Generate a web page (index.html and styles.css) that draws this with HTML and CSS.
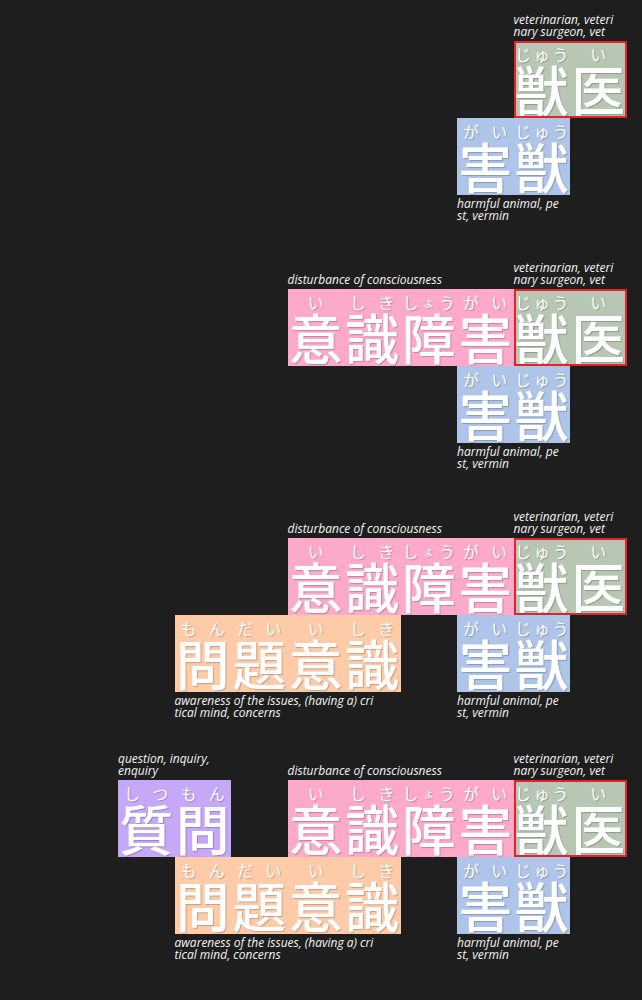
FILE: index.html
```html
<!DOCTYPE html>
<html lang="ja">
<head>
<meta charset="utf-8">
<title>Word chain</title>
<link rel="stylesheet" href="styles.css">
</head>
<body>
<main class="stages">

  <section class="board board--s1">
    <p class="label label--top c8">veterinarian, veteri<br>nary surgeon, vet</p>
    <div class="tile tile--green tile--active c8 r1">
      <div class="cell"><div class="ruby"><span>じ</span><span>ゅ</span><span>う</span></div><div class="kanji">獣</div></div>
      <div class="cell"><div class="ruby"><span>い</span></div><div class="kanji">医</div></div>
    </div>
    <div class="tile tile--blue c7 r2">
      <div class="cell"><div class="ruby"><span>が</span><span>い</span></div><div class="kanji">害</div></div>
      <div class="cell"><div class="ruby"><span>じ</span><span>ゅ</span><span>う</span></div><div class="kanji">獣</div></div>
    </div>
    <p class="label label--bottom c7">harmful animal, pe<br>st, vermin</p>
  </section>

  <section class="board board--s2">
    <p class="label label--top c4 w4">disturbance of consciousness</p>
    <p class="label label--top c8">veterinarian, veteri<br>nary surgeon, vet</p>
    <div class="tile tile--pink c4 w4 r1">
      <div class="cell"><div class="ruby"><span>い</span></div><div class="kanji">意</div></div>
      <div class="cell"><div class="ruby"><span>し</span><span>き</span></div><div class="kanji">識</div></div>
      <div class="cell"><div class="ruby"><span>し</span><span class="sm">ょ</span><span>う</span></div><div class="kanji">障</div></div>
      <div class="cell"><div class="ruby"><span>が</span><span>い</span></div><div class="kanji">害</div></div>
    </div>
    <div class="tile tile--green tile--active c8 r1">
      <div class="cell"><div class="ruby"><span>じ</span><span>ゅ</span><span>う</span></div><div class="kanji">獣</div></div>
      <div class="cell"><div class="ruby"><span>い</span></div><div class="kanji">医</div></div>
    </div>
    <div class="tile tile--blue c7 r2">
      <div class="cell"><div class="ruby"><span>が</span><span>い</span></div><div class="kanji">害</div></div>
      <div class="cell"><div class="ruby"><span>じ</span><span>ゅ</span><span>う</span></div><div class="kanji">獣</div></div>
    </div>
    <p class="label label--bottom c7">harmful animal, pe<br>st, vermin</p>
  </section>

  <section class="board board--s3">
    <p class="label label--top c4 w4">disturbance of consciousness</p>
    <p class="label label--top c8">veterinarian, veteri<br>nary surgeon, vet</p>
    <div class="tile tile--pink c4 w4 r1">
      <div class="cell"><div class="ruby"><span>い</span></div><div class="kanji">意</div></div>
      <div class="cell"><div class="ruby"><span>し</span><span>き</span></div><div class="kanji">識</div></div>
      <div class="cell"><div class="ruby"><span>し</span><span class="sm">ょ</span><span>う</span></div><div class="kanji">障</div></div>
      <div class="cell"><div class="ruby"><span>が</span><span>い</span></div><div class="kanji">害</div></div>
    </div>
    <div class="tile tile--green tile--active c8 r1">
      <div class="cell"><div class="ruby"><span>じ</span><span>ゅ</span><span>う</span></div><div class="kanji">獣</div></div>
      <div class="cell"><div class="ruby"><span>い</span></div><div class="kanji">医</div></div>
    </div>
    <div class="tile tile--peach c2 w4 r2">
      <div class="cell"><div class="ruby"><span>も</span><span>ん</span></div><div class="kanji">問</div></div>
      <div class="cell"><div class="ruby"><span>だ</span><span>い</span></div><div class="kanji">題</div></div>
      <div class="cell"><div class="ruby"><span>い</span></div><div class="kanji">意</div></div>
      <div class="cell"><div class="ruby"><span>し</span><span>き</span></div><div class="kanji">識</div></div>
    </div>
    <div class="tile tile--blue c7 r2">
      <div class="cell"><div class="ruby"><span>が</span><span>い</span></div><div class="kanji">害</div></div>
      <div class="cell"><div class="ruby"><span>じ</span><span>ゅ</span><span>う</span></div><div class="kanji">獣</div></div>
    </div>
    <p class="label label--bottom c2 w4">awareness of the issues, (having a) cri<br>tical mind, concerns</p>
    <p class="label label--bottom c7">harmful animal, pe<br>st, vermin</p>
  </section>

  <section class="board board--s4">
    <p class="label label--top c1">question, inquiry,<br>enquiry</p>
    <p class="label label--top c4 w4">disturbance of consciousness</p>
    <p class="label label--top c8">veterinarian, veteri<br>nary surgeon, vet</p>
    <div class="tile tile--purple c1 r1">
      <div class="cell"><div class="ruby"><span>し</span><span>つ</span></div><div class="kanji">質</div></div>
      <div class="cell"><div class="ruby"><span>も</span><span>ん</span></div><div class="kanji">問</div></div>
    </div>
    <div class="tile tile--pink c4 w4 r1">
      <div class="cell"><div class="ruby"><span>い</span></div><div class="kanji">意</div></div>
      <div class="cell"><div class="ruby"><span>し</span><span>き</span></div><div class="kanji">識</div></div>
      <div class="cell"><div class="ruby"><span>し</span><span class="sm">ょ</span><span>う</span></div><div class="kanji">障</div></div>
      <div class="cell"><div class="ruby"><span>が</span><span>い</span></div><div class="kanji">害</div></div>
    </div>
    <div class="tile tile--green tile--active c8 r1">
      <div class="cell"><div class="ruby"><span>じ</span><span>ゅ</span><span>う</span></div><div class="kanji">獣</div></div>
      <div class="cell"><div class="ruby"><span>い</span></div><div class="kanji">医</div></div>
    </div>
    <div class="tile tile--peach c2 w4 r2">
      <div class="cell"><div class="ruby"><span>も</span><span>ん</span></div><div class="kanji">問</div></div>
      <div class="cell"><div class="ruby"><span>だ</span><span>い</span></div><div class="kanji">題</div></div>
      <div class="cell"><div class="ruby"><span>い</span></div><div class="kanji">意</div></div>
      <div class="cell"><div class="ruby"><span>し</span><span>き</span></div><div class="kanji">識</div></div>
    </div>
    <div class="tile tile--blue c7 r2">
      <div class="cell"><div class="ruby"><span>が</span><span>い</span></div><div class="kanji">害</div></div>
      <div class="cell"><div class="ruby"><span>じ</span><span>ゅ</span><span>う</span></div><div class="kanji">獣</div></div>
    </div>
    <p class="label label--bottom c2 w4">awareness of the issues, (having a) cri<br>tical mind, concerns</p>
    <p class="label label--bottom c7">harmful animal, pe<br>st, vermin</p>
  </section>

</main>
</body>
</html>
```

FILE: styles.css
```css
html, body {
  margin: 0;
  padding: 0;
  background: #1e1e1e;
}

body {
  font-family: "Open Sans", "Noto Sans CJK JP", sans-serif;
  color: #f2f2f2;
}

.stages {
  padding-top: 13px;
}

.board {
  display: grid;
  grid-template-columns: repeat(9, 56.5px);
  grid-template-rows: 28px 77px 77px 28px;
  margin-left: 118px;
}

.board--s2 { margin-top: 38px; }
.board--s3 { margin-top: 39px; }
.board--s4 { margin-top: 32px; }

/* grid placement */
.c1 { grid-column: 1 / span 2; }
.c2 { grid-column: 2 / span 2; }
.c4 { grid-column: 4 / span 2; }
.c7 { grid-column: 7 / span 2; }
.c8 { grid-column: 8 / span 2; }
.c2.w4 { grid-column: 2 / span 4; }
.c4.w4 { grid-column: 4 / span 4; }
.r1 { grid-row: 2; }
.r2 { grid-row: 3; }

.label {
  margin: 0;
  font-size: 12px;
  line-height: 12px;
  font-style: italic;
  color: #f4f4f4;
  white-space: nowrap;
}

.label--top {
  grid-row: 1;
  align-self: end;
  padding-bottom: 3px;
}

.label--bottom {
  grid-row: 4;
  align-self: start;
  padding-top: 3px;
}

.tile {
  display: flex;
  height: 77px;
  position: relative;
}

.tile--green  { background: #b7c7b4; }
.tile--blue   { background: #aec4e8; }
.tile--pink   { background: #fda9c9; }
.tile--peach  { background: #fecba8; }
.tile--purple { background: #c6a8f8; }

.tile--active {
  outline: 2px solid #e3222b;
  outline-offset: -2px;
  z-index: 1;
}

.cell {
  width: 56.5px;
  display: flex;
  flex-direction: column;
  align-items: center;
  font-family: "Noto Sans CJK JP", sans-serif;
  color: #ffffff;
  text-shadow: 1px 1px 1px rgba(0, 0, 0, 0.22);
}

.ruby {
  width: 100%;
  height: 16px;
  padding-top: 5px;
  display: flex;
  justify-content: space-around;
  font-size: 16px;
  line-height: 16px;
  font-weight: 400;
}

.ruby .sm {
  font-size: 12px;
  align-self: flex-end;
}

.kanji {
  font-size: 54px;
  line-height: 54px;
  font-weight: 500;
}
```
